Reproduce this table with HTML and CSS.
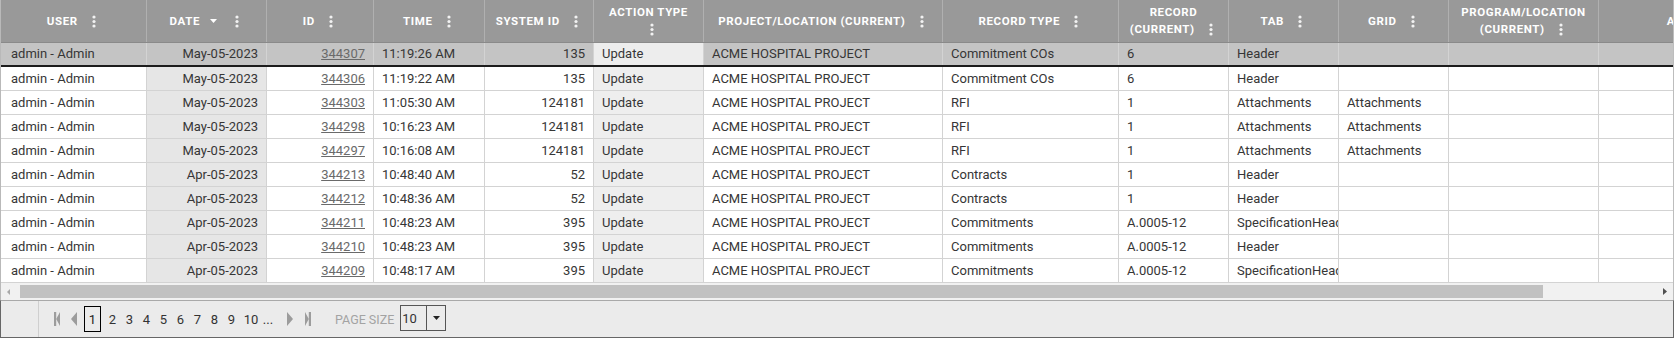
FILE: index.html
```html
<!DOCTYPE html>
<html>
<head>
<meta charset="utf-8">
<link rel="stylesheet" href="styles.css">
</head>
<body>
<div class="grid">
  <div class="viewport">
    <div class="row head">
      <div class="th"><span class="lbl">User <svg class="kebab" viewBox="0 0 4 13"><circle cx="2" cy="2" r="1.6"/><circle cx="2" cy="6.5" r="1.6"/><circle cx="2" cy="11" r="1.6"/></svg></span></div>
      <div class="th"><span class="lbl">Date<svg class="sort" viewBox="0 0 7 4"><polygon points="0,0 7,0 3.5,4"/></svg> <svg class="kebab" viewBox="0 0 4 13"><circle cx="2" cy="2" r="1.6"/><circle cx="2" cy="6.5" r="1.6"/><circle cx="2" cy="11" r="1.6"/></svg></span></div>
      <div class="th"><span class="lbl">ID <svg class="kebab" viewBox="0 0 4 13"><circle cx="2" cy="2" r="1.6"/><circle cx="2" cy="6.5" r="1.6"/><circle cx="2" cy="11" r="1.6"/></svg></span></div>
      <div class="th"><span class="lbl">Time <svg class="kebab" viewBox="0 0 4 13"><circle cx="2" cy="2" r="1.6"/><circle cx="2" cy="6.5" r="1.6"/><circle cx="2" cy="11" r="1.6"/></svg></span></div>
      <div class="th"><span class="lbl">System ID <svg class="kebab" viewBox="0 0 4 13"><circle cx="2" cy="2" r="1.6"/><circle cx="2" cy="6.5" r="1.6"/><circle cx="2" cy="11" r="1.6"/></svg></span></div>
      <div class="th"><span class="lbl">Action Type <svg class="kebab" viewBox="0 0 4 13"><circle cx="2" cy="2" r="1.6"/><circle cx="2" cy="6.5" r="1.6"/><circle cx="2" cy="11" r="1.6"/></svg></span></div>
      <div class="th"><span class="lbl">Project/Location (Current) <svg class="kebab" viewBox="0 0 4 13"><circle cx="2" cy="2" r="1.6"/><circle cx="2" cy="6.5" r="1.6"/><circle cx="2" cy="11" r="1.6"/></svg></span></div>
      <div class="th"><span class="lbl">Record Type <svg class="kebab" viewBox="0 0 4 13"><circle cx="2" cy="2" r="1.6"/><circle cx="2" cy="6.5" r="1.6"/><circle cx="2" cy="11" r="1.6"/></svg></span></div>
      <div class="th"><span class="lbl">Record (Current) <svg class="kebab" viewBox="0 0 4 13"><circle cx="2" cy="2" r="1.6"/><circle cx="2" cy="6.5" r="1.6"/><circle cx="2" cy="11" r="1.6"/></svg></span></div>
      <div class="th"><span class="lbl">Tab <svg class="kebab" viewBox="0 0 4 13"><circle cx="2" cy="2" r="1.6"/><circle cx="2" cy="6.5" r="1.6"/><circle cx="2" cy="11" r="1.6"/></svg></span></div>
      <div class="th"><span class="lbl">Grid <svg class="kebab" viewBox="0 0 4 13"><circle cx="2" cy="2" r="1.6"/><circle cx="2" cy="6.5" r="1.6"/><circle cx="2" cy="11" r="1.6"/></svg></span></div>
      <div class="th"><span class="lbl">Program/Location (Current) <svg class="kebab" viewBox="0 0 4 13"><circle cx="2" cy="2" r="1.6"/><circle cx="2" cy="6.5" r="1.6"/><circle cx="2" cy="11" r="1.6"/></svg></span></div>
      <div class="th"><span class="lbl">Attribute <svg class="kebab" viewBox="0 0 4 13"><circle cx="2" cy="2" r="1.6"/><circle cx="2" cy="6.5" r="1.6"/><circle cx="2" cy="11" r="1.6"/></svg></span></div>
    </div>

    <div class="row tr sel">
      <div class="td first">admin - Admin</div><div class="td r date">May-05-2023</div><div class="td r"><a>344307</a></div><div class="td">11:19:26 AM</div><div class="td r">135</div><div class="td act">Update</div><div class="td">ACME HOSPITAL PROJECT</div><div class="td">Commitment COs</div><div class="td">6</div><div class="td">Header</div><div class="td"></div><div class="td"></div><div class="td"></div>
    </div>
    <div class="row tr">
      <div class="td first">admin - Admin</div><div class="td r date">May-05-2023</div><div class="td r"><a>344306</a></div><div class="td">11:19:22 AM</div><div class="td r">135</div><div class="td act">Update</div><div class="td">ACME HOSPITAL PROJECT</div><div class="td">Commitment COs</div><div class="td">6</div><div class="td">Header</div><div class="td"></div><div class="td"></div><div class="td"></div>
    </div>
    <div class="row tr">
      <div class="td first">admin - Admin</div><div class="td r date">May-05-2023</div><div class="td r"><a>344303</a></div><div class="td">11:05:30 AM</div><div class="td r">124181</div><div class="td act">Update</div><div class="td">ACME HOSPITAL PROJECT</div><div class="td">RFI</div><div class="td">1</div><div class="td">Attachments</div><div class="td">Attachments</div><div class="td"></div><div class="td"></div>
    </div>
    <div class="row tr">
      <div class="td first">admin - Admin</div><div class="td r date">May-05-2023</div><div class="td r"><a>344298</a></div><div class="td">10:16:23 AM</div><div class="td r">124181</div><div class="td act">Update</div><div class="td">ACME HOSPITAL PROJECT</div><div class="td">RFI</div><div class="td">1</div><div class="td">Attachments</div><div class="td">Attachments</div><div class="td"></div><div class="td"></div>
    </div>
    <div class="row tr">
      <div class="td first">admin - Admin</div><div class="td r date">May-05-2023</div><div class="td r"><a>344297</a></div><div class="td">10:16:08 AM</div><div class="td r">124181</div><div class="td act">Update</div><div class="td">ACME HOSPITAL PROJECT</div><div class="td">RFI</div><div class="td">1</div><div class="td">Attachments</div><div class="td">Attachments</div><div class="td"></div><div class="td"></div>
    </div>
    <div class="row tr">
      <div class="td first">admin - Admin</div><div class="td r date">Apr-05-2023</div><div class="td r"><a>344213</a></div><div class="td">10:48:40 AM</div><div class="td r">52</div><div class="td act">Update</div><div class="td">ACME HOSPITAL PROJECT</div><div class="td">Contracts</div><div class="td">1</div><div class="td">Header</div><div class="td"></div><div class="td"></div><div class="td"></div>
    </div>
    <div class="row tr">
      <div class="td first">admin - Admin</div><div class="td r date">Apr-05-2023</div><div class="td r"><a>344212</a></div><div class="td">10:48:36 AM</div><div class="td r">52</div><div class="td act">Update</div><div class="td">ACME HOSPITAL PROJECT</div><div class="td">Contracts</div><div class="td">1</div><div class="td">Header</div><div class="td"></div><div class="td"></div><div class="td"></div>
    </div>
    <div class="row tr">
      <div class="td first">admin - Admin</div><div class="td r date">Apr-05-2023</div><div class="td r"><a>344211</a></div><div class="td">10:48:23 AM</div><div class="td r">395</div><div class="td act">Update</div><div class="td">ACME HOSPITAL PROJECT</div><div class="td">Commitments</div><div class="td">A.0005-12</div><div class="td">SpecificationHeader</div><div class="td"></div><div class="td"></div><div class="td"></div>
    </div>
    <div class="row tr">
      <div class="td first">admin - Admin</div><div class="td r date">Apr-05-2023</div><div class="td r"><a>344210</a></div><div class="td">10:48:23 AM</div><div class="td r">395</div><div class="td act">Update</div><div class="td">ACME HOSPITAL PROJECT</div><div class="td">Commitments</div><div class="td">A.0005-12</div><div class="td">Header</div><div class="td"></div><div class="td"></div><div class="td"></div>
    </div>
    <div class="row tr">
      <div class="td first">admin - Admin</div><div class="td r date">Apr-05-2023</div><div class="td r"><a>344209</a></div><div class="td">10:48:17 AM</div><div class="td r">395</div><div class="td act">Update</div><div class="td">ACME HOSPITAL PROJECT</div><div class="td">Commitments</div><div class="td">A.0005-12</div><div class="td">SpecificationHeader</div><div class="td"></div><div class="td"></div><div class="td"></div>
    </div>
  </div>

  <div class="hscroll">
    <div class="sb-btn sb-left"><svg width="3" height="6" viewBox="0 0 3 6"><polygon points="3,0 3,6 0,3"/></svg></div>
    <div class="thumb"></div>
    <div class="sb-fill"></div>
    <div class="sb-btn sb-right"><svg width="4" height="7" viewBox="0 0 4 7"><polygon points="0,0 0,7 4,3.5"/></svg></div>
  </div>

  <div class="pager">
    <div class="pager-lead"></div>
    <div class="pager-nav">
      <svg class="pg-icon pg-first" viewBox="0 0 6 16"><rect x="0" y="1" width="2.2" height="14"/><polygon points="6,1 6,15 2.2,8"/></svg>
      <svg class="pg-icon pg-prev" viewBox="0 0 6 16"><polygon points="6,1 6,15 0,8"/></svg>
      <span class="pg-cur">1</span>
      <span class="pg-num pg-after">2</span>
      <span class="pg-num">3</span>
      <span class="pg-num">4</span>
      <span class="pg-num">5</span>
      <span class="pg-num">6</span>
      <span class="pg-num">7</span>
      <span class="pg-num">8</span>
      <span class="pg-num">9</span>
      <span class="pg-num pg-wide">10</span>
      <span class="pg-num pg-more">...</span>
      <svg class="pg-icon pg-next" viewBox="0 0 6 16"><polygon points="0,1 0,15 6,8"/></svg>
      <svg class="pg-icon pg-last" viewBox="0 0 6 16"><polygon points="0,1 0,15 3.8,8"/><rect x="3.8" y="1" width="2.2" height="14"/></svg>
      <span class="pg-size-label">PAGE SIZE</span>
      <div class="pg-select">
        <span class="pg-select-val">10</span>
        <span class="pg-select-btn"><svg width="7" height="4" viewBox="0 0 7 4"><polygon points="0,0 7,0 3.5,4"/></svg></span>
      </div>
    </div>
  </div>
</div>
</body>
</html>
```
FILE: styles.css
```css
* { box-sizing: border-box; }

body {
  margin: 0;
  background: #ffffff;
  font-family: Roboto, "Liberation Sans", Arial, sans-serif;
}

.grid {
  width: 1674px;
}

.viewport {
  overflow: hidden;
  border-left: 1px solid #b9b9b9;
  border-right: 1px solid #bdbdbd;
}

.row {
  display: grid;
  grid-template-columns: 146px 120px 107px 111px 109px 110px 239px 176px 110px 110px 110px 150px 225px;
  width: 1823px;
}

/* header */
.head {
  height: 43px;
  background: #999999;
  border-bottom: 1px solid #8a8a8a;
}

.th {
  display: flex;
  align-items: center;
  justify-content: center;
  text-align: center;
  padding: 0 8px;
  border-right: 1px solid #b0b0b0;
  color: #ffffff;
  font-size: 11.5px;
  font-weight: 700;
  letter-spacing: 0.6px;
  line-height: 17px;
  text-transform: uppercase;
}

.lbl { display: block; }

.kebab {
  display: inline-block;
  width: 4px;
  height: 13px;
  margin-left: 11px;
  margin-right: 4px;
  vertical-align: -3px;
  fill: #f2f2f2;
}

.sort {
  display: inline-block;
  width: 7px;
  height: 4px;
  margin-left: 10px;
  margin-right: 4px;
  vertical-align: 2px;
  fill: #ffffff;
}

/* body rows */
.tr {
  height: 24px;
  background: #ffffff;
  border-bottom: 1px solid #d3d3d3;
}

.td {
  padding: 0 8px;
  border-right: 1px solid #d3d3d3;
  font-size: 13px;
  line-height: 23px;
  color: #363636;
  white-space: nowrap;
  overflow: hidden;
}

.td.first { padding-left: 10px; }
.td.r { text-align: right; }
.td.date { background: #e6e6e6; }
.td.act { background: #eeeeee; }

.td a {
  color: #6a6a6a;
  text-decoration: underline;
}

.sel {
  background: #c4c4c4;
  border-bottom: 2px solid #1c1c1c;
}

.sel .td { line-height: 22px; }
.sel .td.date { background: transparent; }
.sel .td.act { background: #ededed; }

/* horizontal scrollbar */
.hscroll {
  display: flex;
  align-items: center;
  height: 17px;
  background: #f1f1f1;
  border-left: 1px solid #b9b9b9;
  border-right: 1px solid #bdbdbd;
}

.sb-btn {
  display: flex;
  align-items: center;
  justify-content: center;
  height: 17px;
}

.sb-left { width: 19px; fill: #a8a8a8; padding-right: 4px; }
.sb-right { width: 17px; fill: #505050; }

.thumb {
  width: 1523px;
  height: 13px;
  background: #c1c1c1;
}

.sb-fill { flex: 1; }

/* pager */
.pager {
  display: flex;
  height: 38px;
  background: #ebebeb;
  border: 1px solid #666666;
  border-top-color: #a9a9a9;
}

.pager-lead {
  width: 38px;
  border-right: 1px solid #cfcfcf;
}

.pager-nav {
  display: flex;
  align-items: center;
  padding-left: 15px;
  font-size: 13px;
  color: #333333;
}

.pg-icon {
  width: 6px;
  height: 16px;
  fill: #9c9c9c;
}

.pg-prev { margin-left: 11px; }
.pg-next { margin-left: 13px; }
.pg-last { margin-left: 12px; }

.pg-cur {
  display: flex;
  align-items: center;
  justify-content: center;
  width: 17px;
  height: 26px;
  margin-left: 7px;
  border: 1px solid #000000;
  color: #222222;
}

.pg-num {
  width: 17px;
  text-align: center;
}

.pg-after { margin-left: 3px; }
.pg-wide { width: 22px; }
.pg-more { width: 12px; }

.pg-size-label {
  margin-left: 24px;
  font-size: 12.5px;
  color: #a3a3a3;
}

.pg-select {
  display: flex;
  width: 46px;
  height: 26px;
  margin-left: 6px;
  margin-bottom: 2px;
  border: 1px solid #555555;
}

.pg-select-val {
  width: 25px;
  padding-left: 1px;
  line-height: 26px;
  font-size: 13px;
  color: #333333;
}

.pg-select-btn {
  flex: 1;
  display: flex;
  align-items: center;
  justify-content: center;
  border-left: 1px solid #555555;
  fill: #222222;
}
```
